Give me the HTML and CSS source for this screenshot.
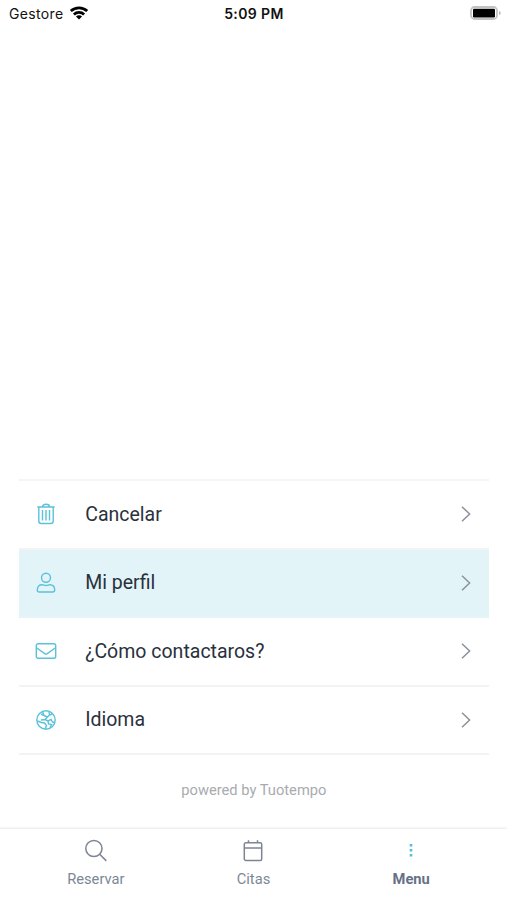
FILE: index.html
```html
<!DOCTYPE html>
<html lang="es">
<head>
<meta charset="utf-8">
<meta name="viewport" content="width=device-width, initial-scale=1">
<title>Menu</title>
<link rel="stylesheet" href="styles.css">
</head>
<body>
<header class="status">
  <div class="carrier"><span class="carrier-name">Gestore</span>
    <svg class="wifi" viewBox="0 0 20 14" width="20" height="14"><path d="M1.800 5.100a11.800 11.800 0 0 1 16.400 0M4.900 8.400a7.300 7.300 0 0 1 10.200 0" fill="none" stroke="#000" stroke-width="2.800"/><path d="M10 13.600 7 10.600a4.200 4.200 0 0 1 6 0z"/></svg>
  </div>
  <div class="time">5:09 PM</div>
  <div class="power"><svg viewBox="0 0 32 14" width="32" height="14"><rect x="1" y="1" width="26" height="12" rx="3.500" fill="#fff" stroke="#c2c2c2" stroke-width="1.800"/><rect x="3" y="2.800" width="22" height="8.600" rx="1.200"/><path d="M29 5v4q1.700-.6 1.700-2T29 5" fill="#b5b5b5"/></svg></div>
</header>
<main class="content">
  <nav class="list">
    <a class="row">
      <svg class="icon" viewBox="0 0 22 22"><path d="M2.300 4h17.400M7.500 3.800c0-3.400 7-3.400 7 0M3.800 4.500V18q0 2.500 2.500 2.500h9.400q2.500 0 2.500-2.500V4.500M7.500 7v10.500M11 7v10.500M14.500 7v10.500"/></svg>
      <span class="label">Cancelar</span>
      <svg class="chevron" viewBox="0 0 10 16"><path d="m1 .8 7.600 7.200L1 15.200"/></svg>
    </a>
    <a class="row selected">
      <svg class="icon" viewBox="0 0 22 22"><circle cx="11" cy="5.800" r="4.500"/><path d="M4.300 20q-2 0-2-1.900c0-3.700 2-5.300 4.800-5.300 1.700 0 2 .7 3.900.7s2.200-.7 3.900-.7c2.800 0 4.800 1.600 4.800 5.300q0 1.900-2 1.900z"/></svg>
      <span class="label">Mi perfil</span>
      <svg class="chevron" viewBox="0 0 10 16"><path d="m1 .8 7.600 7.200L1 15.200"/></svg>
    </a>
    <a class="row">
      <svg class="icon" viewBox="0 0 22 22"><rect x="1.300" y="3.700" width="19.400" height="14.600" rx="1.800"/><path d="m1.500 7.800 8.200 5.800q1.300.8 2.600 0l8.200-5.800"/></svg>
      <span class="label">¿Cómo contactaros?</span>
      <svg class="chevron" viewBox="0 0 10 16"><path d="m1 .8 7.600 7.200L1 15.200"/></svg>
    </a>
    <a class="row">
      <svg class="icon" viewBox="0 0 22 22"><circle cx="11" cy="11" r="9.200"/><path d="M7.500 2.500 9 6.500 6 5M9 6.500 12.500 8 10 10.500l-4 .5M12.500 8l2-2-.5-3.500M14.500 6l3-1M10 10.500l3 1.500 3-1.500 1.500 2.500 2.500.5M2.500 12l4 1.500 3 .5 2 2.500-1.500 3.500M13 12l.5 3 3 .5-1.500 3"/></svg>
      <span class="label">Idioma</span>
      <svg class="chevron" viewBox="0 0 10 16"><path d="m1 .8 7.600 7.200L1 15.200"/></svg>
    </a>
  </nav>
  <p class="powered">powered by Tuotempo</p>
</main>
<footer class="tabs">
  <a class="tab"><svg viewBox="0 0 24 24"><circle cx="9.900" cy="9.500" r="8.100"/><path d="m15.700 15.300 6.600 6.600"/></svg><span>Reservar</span></a>
  <a class="tab"><svg viewBox="0 0 24 24"><rect x="3.300" y="3.800" width="17.400" height="17.700" rx="1.500"/><path d="M3.300 9h17.400M7.500 1.200v2.600M16.500 1.200v2.600"/></svg><span>Citas</span></a>
  <a class="tab active"><svg viewBox="0 0 24 24"><path class="dots" d="M10.700 5h2.600v2.600h-2.600zM10.700 10h2.600v2.600h-2.600zM10.700 15h2.600v2.600h-2.600z"/></svg><span>Menu</span></a>
</footer>
</body>
</html>
```

FILE: styles.css
```css
* { box-sizing: border-box; }
body {
  margin: 0;
  height: 900px;
  display: flex;
  flex-direction: column;
  overflow: hidden;
  background: #fff;
  color: #29313c;
  font-family: Roboto, "Liberation Sans", sans-serif;
}
svg { display: block; flex: none; }
.status {
  height: 27px;
  padding: 0 5px 0 9px;
  display: grid;
  grid-template-columns: 1fr auto 1fr;
  align-items: center;
  color: #111;
  font-family: Inter, sans-serif;
  font-size: 14px;
}
.carrier { display: flex; align-items: center; gap: 5px; }
.carrier-name { letter-spacing: .35px; }
.wifi { margin-top: -2px; }
.time { font-weight: 600; letter-spacing: .4px; margin-right: 3px; }
.power { justify-self: end; margin-top: -1px; }
.content {
  flex: 1;
  padding: 0 18.500px 0 19.200px;
  display: flex;
  flex-direction: column;
  justify-content: flex-end;
}
.list { border-top: 2px solid #f4f5f6; }
.row {
  height: 68.500px;
  padding: 0 18px 0 15.500px;
  display: flex;
  align-items: center;
  border-bottom: 2px solid #f2f3f4;
}
.selected { background: #e3f4f9; border-bottom-color: #e6f4f8; }
.icon {
  width: 22px;
  height: 22px;
  margin-right: 28.500px;
  fill: none;
  stroke: #5bc2d9;
  stroke-width: 1.400;
}
.label { flex: 1; font-size: 19.500px; }
.chevron {
  width: 10px;
  height: 16px;
  fill: none;
  stroke: #8b929b;
  stroke-width: 1.500;
}
.powered {
  height: 73px;
  margin: 0;
  text-align: center;
  line-height: 70px;
  font-size: 14.700px;
  color: #a8abaf;
}
.tabs {
  height: 72px;
  padding: 0 17px;
  display: grid;
  grid-template-columns: repeat(3, 1fr);
  border-top: 1px solid #f0f0f0;
  box-shadow: 0 -1px 2px #f5f5f5;
}
.tab {
  padding-top: 10px;
  display: flex;
  flex-direction: column;
  align-items: center;
  gap: 6px;
  color: #7c8796;
  font-size: 14.700px;
  line-height: 20px;
}
.tab svg { width: 24px; height: 24px; fill: none; stroke: #7b8594; stroke-width: 1.500; }
.active { color: #657286; font-weight: 700; }
.tab .dots { fill: #4fc0d8; stroke: none; }
```
